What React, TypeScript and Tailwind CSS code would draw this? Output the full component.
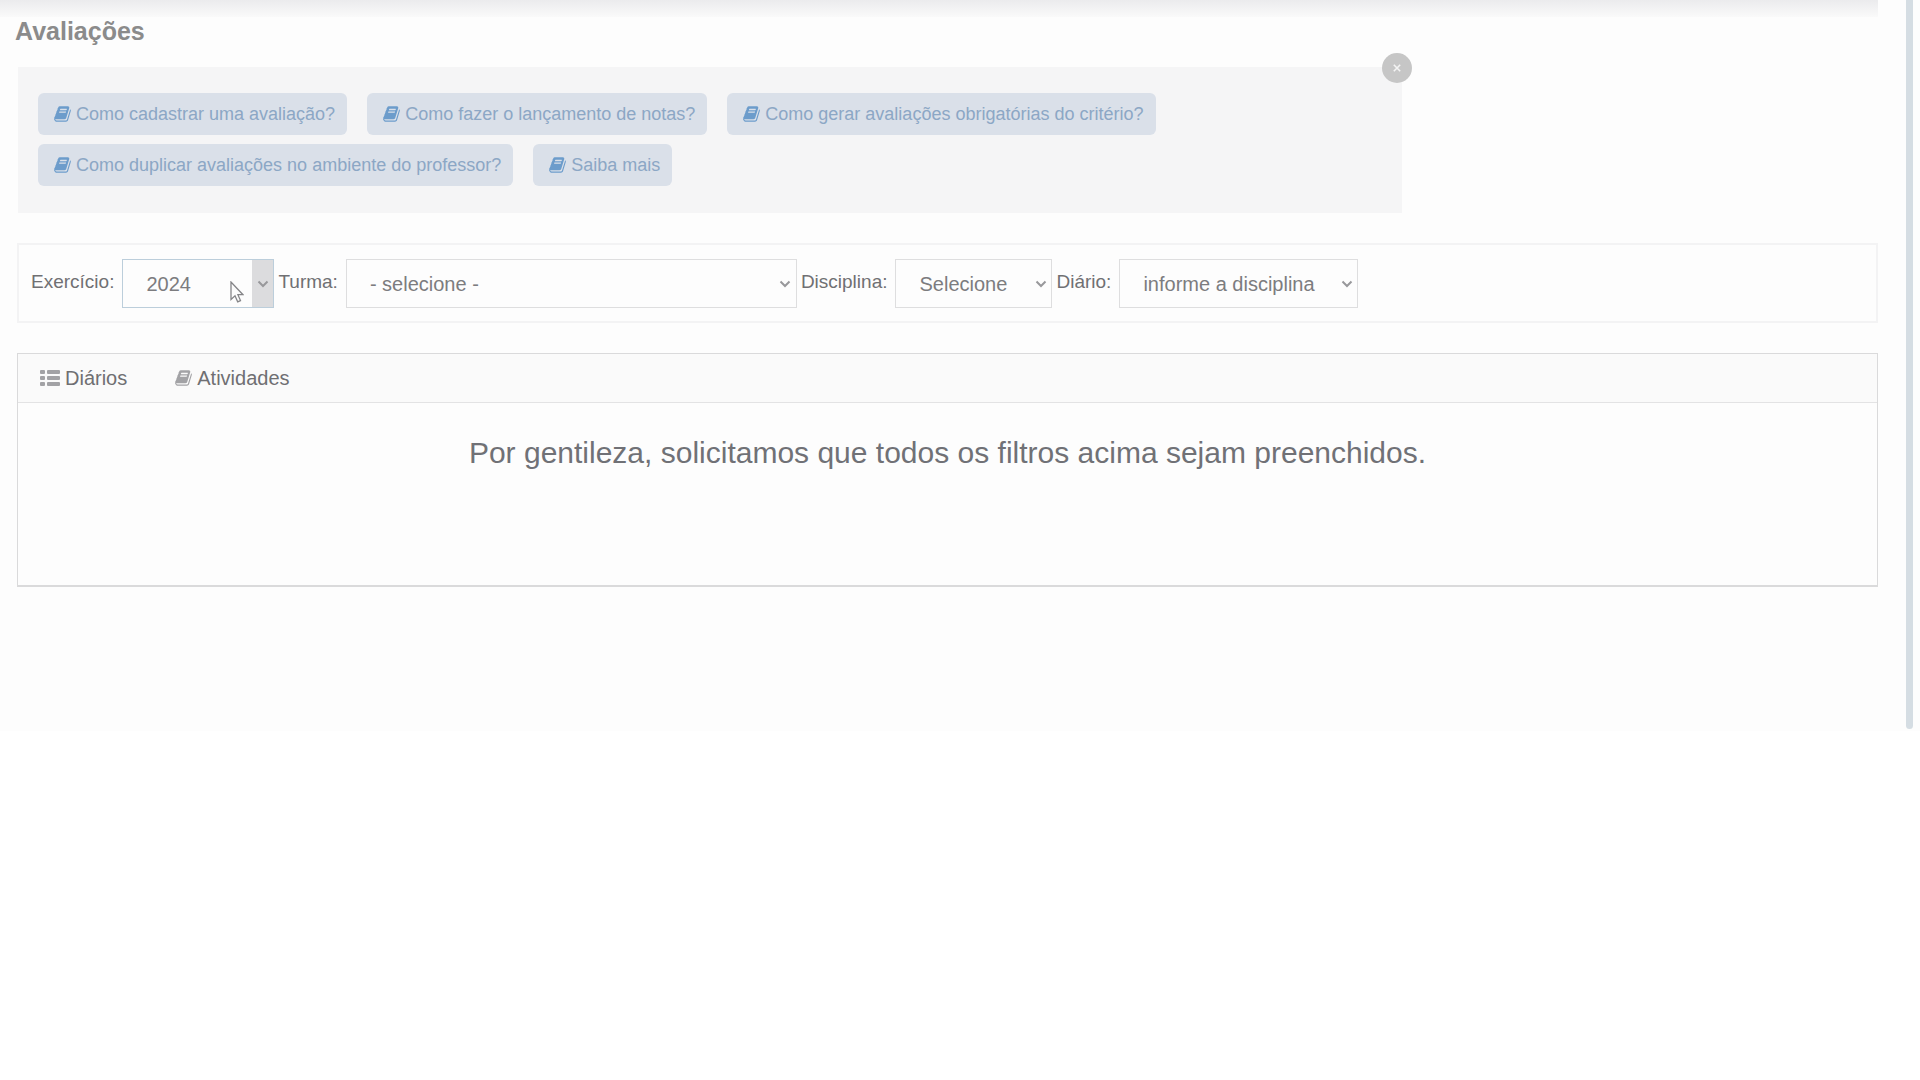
import type { ReactNode } from "react";

const BOOK_PATH =
  "M1639 478q40 57 18 129l-275 906q-19 64-76.5 107.5t-122.5 43.5h-923q-77 0-148.5-53.5t-99.5-131.5q-24-67-2-127 0-4 3-27t4-37q1-8-3-21.5t-3-19.5q2-11 8-21t16.5-23.5 16.5-23.5q23-38 45-91.5t30-91.5q3-10 .5-30t-.5-28q3-11 17-28t17-23q21-36 42-92t25-90q1-9-2.5-32t.5-28q4-13 22-30.5t22-22.5q19-26 42.5-84.5t27.5-96.5q1-8-3-25.5t-2-26.5q2-8 9-18t18-23 17-21q8-12 16.5-30.5t15-35 16-36 19.5-32 26.5-23.5 36-11.5 47.5 5.5l-1 3q38-9 51-9h761q74 0 114 56t18 130l-274 906q-36 119-71.5 153.5t-128.5 34.5h-869q-27 0-38 15-11 16-1 43 24 70 144 70h923q29 0 56-15.5t35-41.5l300-987q7-22 5-57 38 15 59 43zm-1064 2q-4 13 2 22.5t20 9.5h608q13 0 25.5-9.5t16.5-22.5l21-64q4-13-2-22.5t-20-9.5h-608q-13 0-25.5 9.5t-16.5 22.5zm-83 256q-4 13 2 22.5t20 9.5h608q13 0 25.5-9.5t16.5-22.5l21-64q4-13-2-22.5t-20-9.5h-608q-13 0-25.5 9.5t-16.5 22.5z";

function BookIcon({ className }: { className: string }) {
  return (
    <svg viewBox="0 0 1664 1792" fill="currentColor" aria-hidden="true" className={className}>
      <path d={BOOK_PATH} />
    </svg>
  );
}

function ListIcon() {
  return (
    <svg viewBox="0 0 20 16" fill="currentColor" aria-hidden="true" className="h-4 w-5 text-[#a2a2a5]">
      {[0, 6, 12].map((y) => (
        <g key={y}>
          <rect x="0" y={y} width="5" height="4" rx="1" />
          <rect x="7" y={y} width="13" height="4" rx="1" />
        </g>
      ))}
    </svg>
  );
}

function Chevron() {
  return (
    <svg viewBox="0 0 12 8" fill="none" stroke="currentColor" strokeWidth="2" aria-hidden="true" className="h-2 w-3">
      <path d="M1.5 1.5 6 6l4.5-4.5" />
    </svg>
  );
}

const helpLinks = [
  "Como cadastrar uma avaliação?",
  "Como fazer o lançamento de notas?",
  "Como gerar avaliações obrigatórias do critério?",
  "Como duplicar avaliações no ambiente do professor?",
  "Saiba mais",
];

type FilterProps = {
  id: string;
  label: string;
  value: string;
  width: string;
  focused?: boolean;
  children?: ReactNode;
};

function Filter({ id, label, value, width, focused, children }: FilterProps) {
  return (
    <div className="flex items-center gap-2">
      <label htmlFor={id} className="pb-1 text-[19px] leading-6 text-[#707073]">
        {label}
      </label>
      <div className={`relative ${width}`}>
        <select
          id={id}
          className={`block h-[49px] w-full appearance-none border bg-[#fdfdfd] pr-7 pl-[23px] text-[20px] text-[#7c7c7f] outline-none ${
            focused ? "border-[#bccedb]" : "border-[#dededf]"
          }`}
        >
          <option>{value}</option>
        </select>
        <span
          className={`pointer-events-none absolute inset-y-px right-px flex w-[21px] items-center justify-center text-[#98989b] ${
            focused ? "bg-[#dcdcde]" : ""
          }`}
        >
          <Chevron />
        </span>
        {children}
      </div>
    </div>
  );
}

export default function App() {
  return (
    <div className="min-h-screen bg-white font-['Liberation_Sans',Arial,sans-serif]">
      <div className="flex bg-[#fdfdfd] pr-[7px]">
        <main className="min-w-0 flex-1 pb-36">
          <div className="mr-7 h-[17px] bg-linear-to-b from-[#ebebed] to-[#fafafa]" />
          <h1 className="pl-[15px] text-[25px] leading-7 font-bold text-[#8b8b8b]">Avaliações</h1>

          <section className="relative mt-[22px] ml-[18px] w-[73%] max-w-[1384px] bg-[#f5f5f6] px-5 pt-[26px] pb-[27px]">
            <div className="flex flex-wrap gap-x-5 gap-y-[9px]">
              {helpLinks.map((text) => (
                <a
                  key={text}
                  href="#"
                  className="flex h-[42px] items-center gap-[5px] rounded-md bg-[#dae0e9] pr-3 pl-4 text-[18px] text-[#8ca7c5]"
                >
                  <BookIcon className="h-[18px] w-[17px] text-[#6c9ccb]" />
                  {text}
                </a>
              ))}
            </div>
            <button
              type="button"
              aria-label="Fechar"
              className="absolute -top-[14px] -right-[10px] flex size-[30px] items-center justify-center rounded-full bg-[#c6c6c6] text-[#f4f4f4]"
            >
              <svg viewBox="0 0 10 10" stroke="currentColor" strokeWidth="2" aria-hidden="true" className="size-2">
                <path d="M1 1l8 8M9 1 1 9" />
              </svg>
            </button>
          </section>

          <form className="mt-[30px] mr-7 ml-[17px] flex flex-wrap items-center gap-x-1 border-2 border-[#f3f3f4] px-3 pt-[14px] pb-[13px]">
            <Filter id="exercicio" label="Exercício:" value="2024" width="w-[152px]" focused>
              <svg viewBox="0 0 14 22" aria-hidden="true" className="pointer-events-none absolute top-[22px] left-[108px] h-[22px] w-[14px]">
                <path
                  d="M1 1v17.500l4-3.700 2.700 6 2.800-1.200-2.600-5.900H13z"
                  fill="#fbfbfb"
                  stroke="#858588"
                  strokeWidth="1.300"
                />
              </svg>
            </Filter>
            <Filter id="turma" label="Turma:" value="- selecione -" width="w-[451px]" />
            <Filter id="disciplina" label="Disciplina:" value="Selecione" width="w-[157px]" />
            <Filter id="diario" label="Diário:" value="informe a disciplina" width="w-[239px]" />
          </form>

          <section className="mt-[30px] mr-7 ml-[17px] border border-b-2 border-[#dadadb]">
            <nav className="flex h-[49px] items-center gap-12 border-b border-[#e3e3e4] bg-[#fafafa] pl-[22px] text-[20px] text-[#6f6f72]">
              <button type="button" className="flex items-center gap-[5px]">
                <ListIcon />
                Diários
              </button>
              <button type="button" className="flex items-center gap-[5px]">
                <BookIcon className="h-[18px] w-[17px] text-[#a2a2a5]" />
                Atividades
              </button>
            </nav>
            <p className="px-4 pt-8 pb-[114px] text-center text-[30px] leading-9 text-[#707176]">
              Por gentileza, solicitamos que todos os filtros acima sejam preenchidos.
            </p>
          </section>
        </main>
        <div className="mb-0.5 w-[7px] rounded-b-full bg-[#d5dde3]" />
      </div>
    </div>
  );
}
